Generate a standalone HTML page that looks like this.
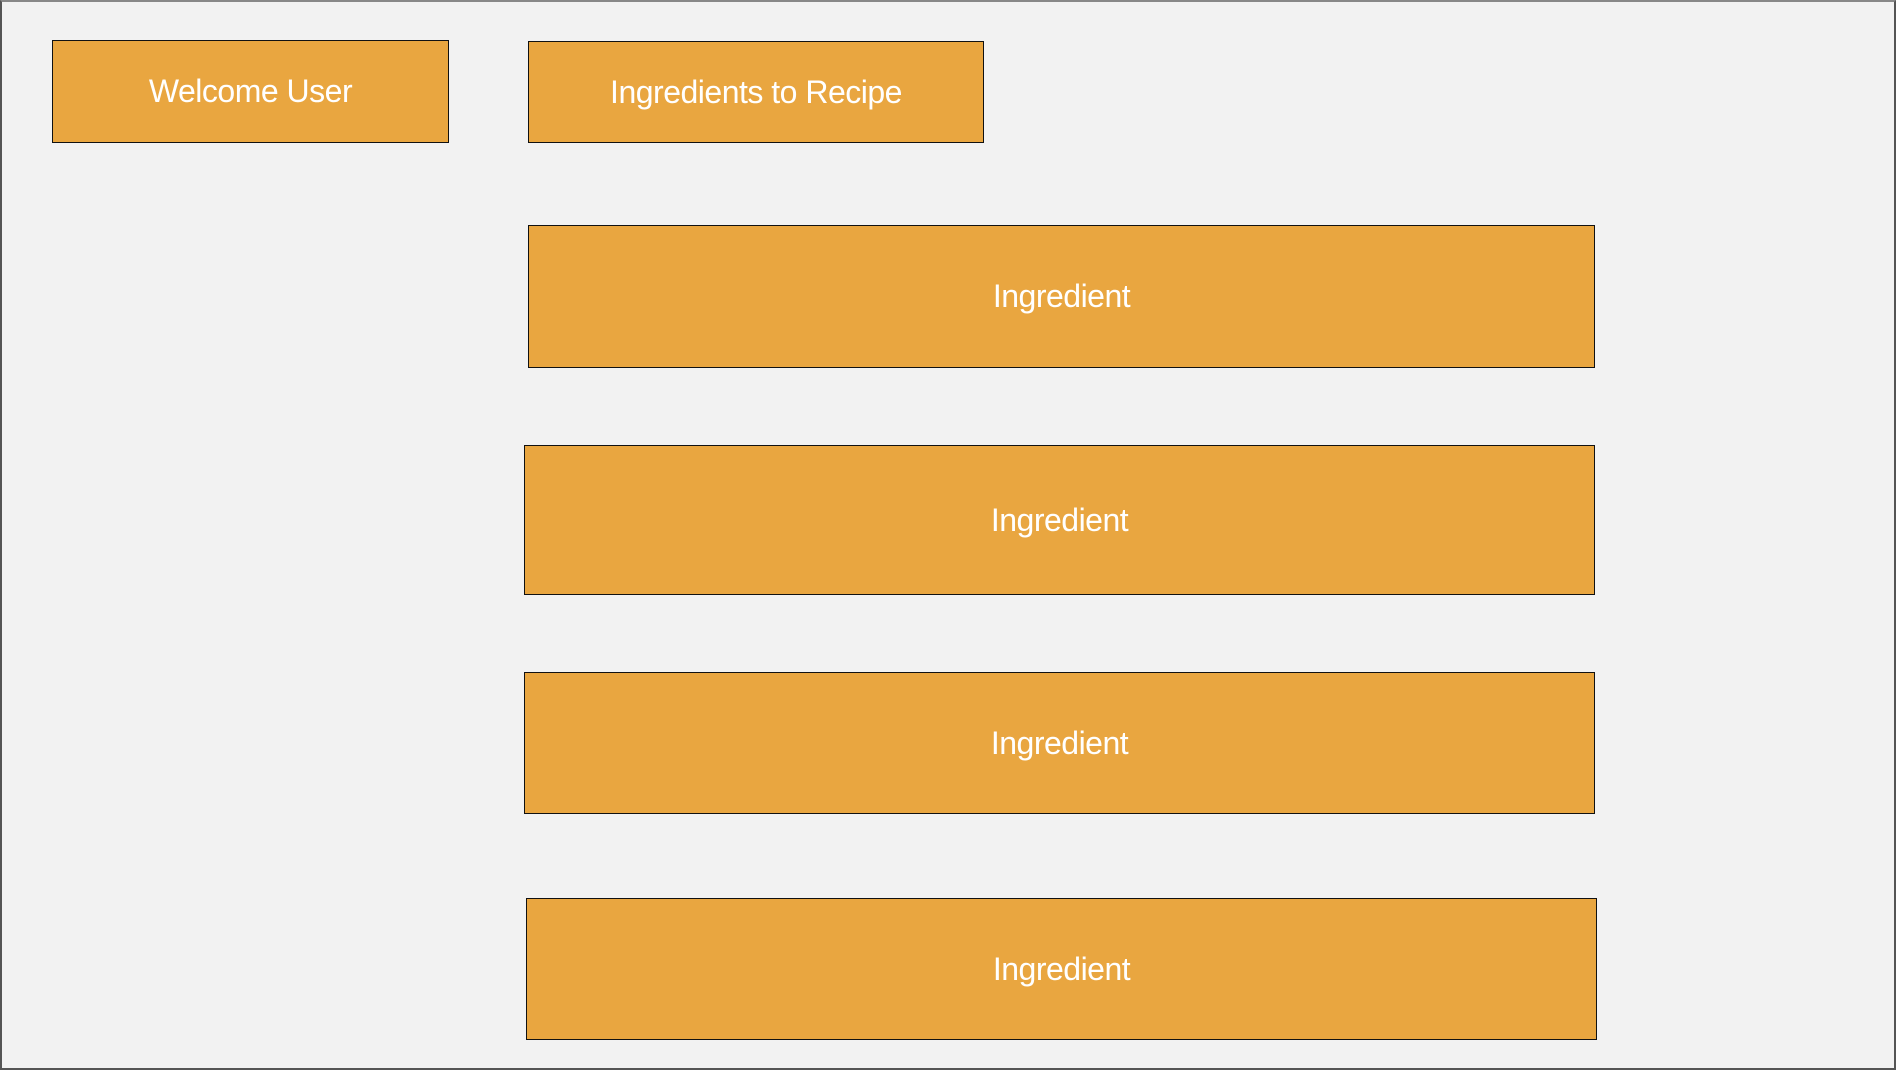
<!DOCTYPE html>
<html><head><style>
html,body{margin:0;padding:0}
body{width:1896px;height:1070px;background:#f2f2f2;position:relative;overflow:hidden;font-family:"Liberation Sans",sans-serif}
.f{position:absolute;left:0;top:0;width:1896px;height:1070px;box-sizing:border-box;border:2px solid #555;border-top-color:#888}
.b{position:absolute;background:#e9a640;border:1px solid #111;box-sizing:border-box;color:#fff;display:flex;align-items:center;justify-content:center;font-size:32px;letter-spacing:-0.5px}
</style></head><body>
<div class="f"></div>
<div class="b" style="left:52px;top:40px;width:397px;height:103px">Welcome User</div>
<div class="b" style="left:528px;top:41px;width:456px;height:102px">Ingredients to Recipe</div>
<div class="b" style="left:528px;top:225px;width:1067px;height:143px">Ingredient</div>
<div class="b" style="left:524px;top:445px;width:1071px;height:150px">Ingredient</div>
<div class="b" style="left:524px;top:672px;width:1071px;height:142px">Ingredient</div>
<div class="b" style="left:526px;top:898px;width:1071px;height:142px">Ingredient</div>
</body></html>
